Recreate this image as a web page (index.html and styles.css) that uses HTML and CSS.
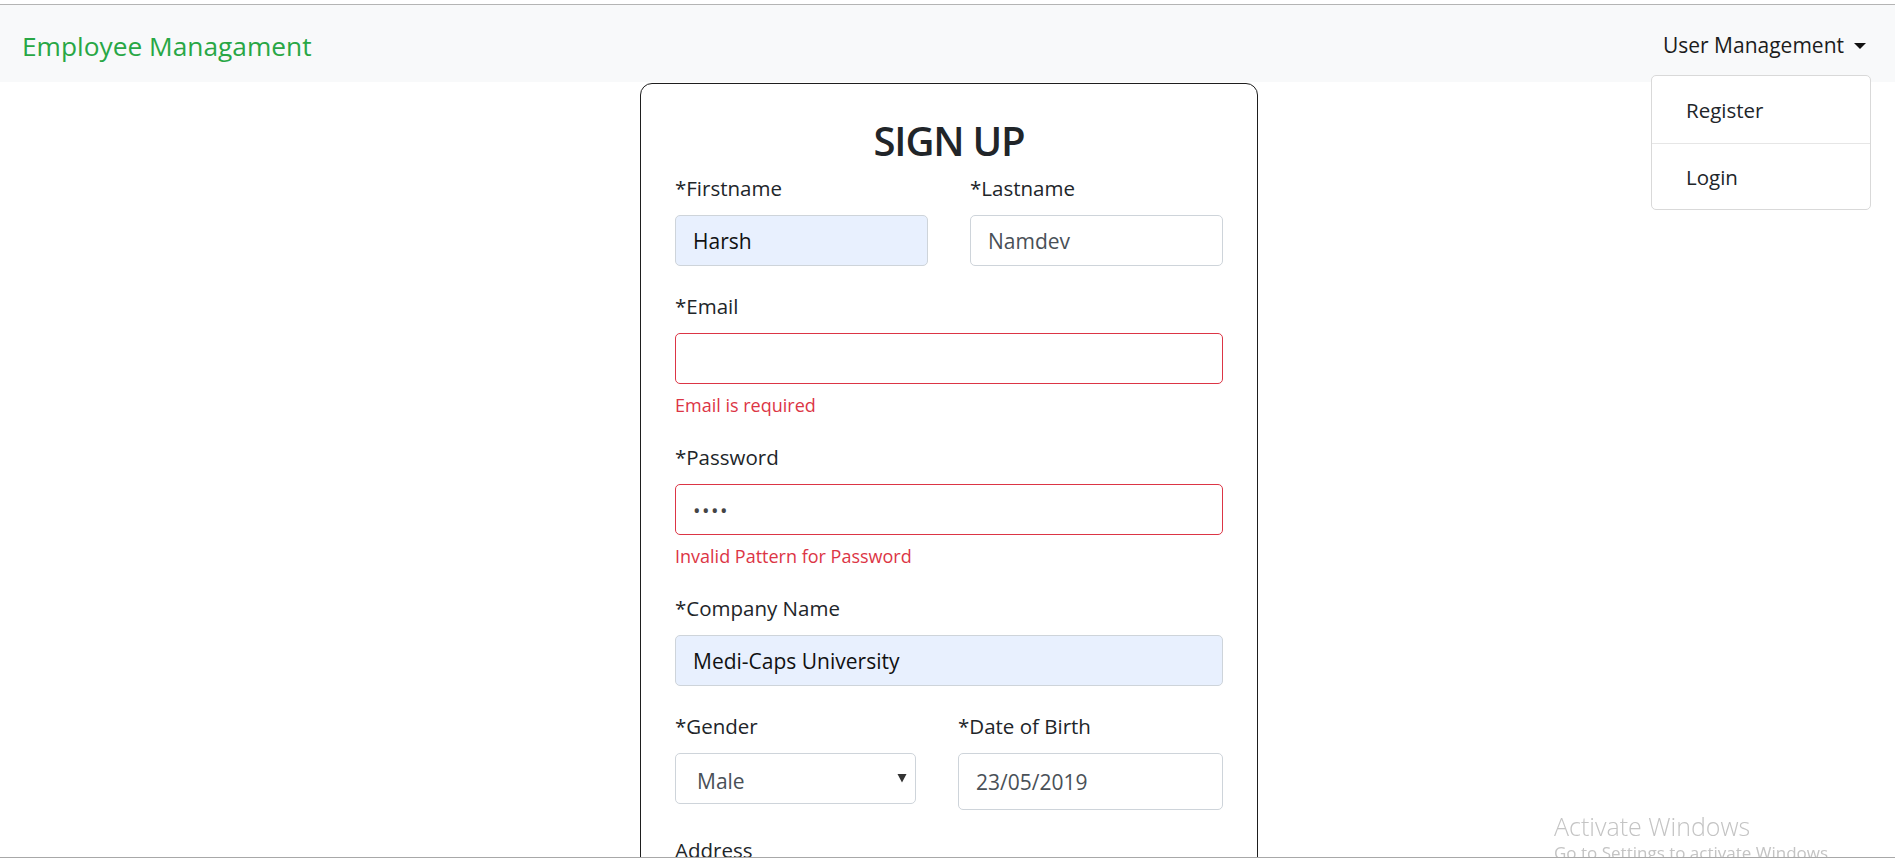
FILE: index.html
```html
<!DOCTYPE html>
<html lang="en">
<head>
<meta charset="utf-8">
<title>Employee Managament</title>
<link rel="stylesheet" href="styles.css">
</head>
<body>
<div class="window-top"></div>
<nav class="navbar">
  <a class="brand" href="#">Employee Managament</a>
  <div class="nav-item">
    <a class="nav-link" href="#">User Management <span class="caret"></span></a>
    <div class="dropdown-menu">
      <a class="dropdown-item" href="#">Register</a>
      <a class="dropdown-item" href="#">Login</a>
    </div>
  </div>
</nav>
<main class="page">
  <section class="card">
    <h2 class="title">SIGN UP</h2>
    <form class="form">
      <div class="row two">
        <div class="group">
          <label class="label">*Firstname</label>
          <input class="field autofill" type="text" value="Harsh">
        </div>
        <div class="group">
          <label class="label">*Lastname</label>
          <input class="field" type="text" value="Namdev">
        </div>
      </div>
      <div class="group">
        <label class="label">*Email</label>
        <input class="field invalid" type="text" value="">
        <div class="error">Email is required</div>
      </div>
      <div class="group">
        <label class="label">*Password</label>
        <input class="field invalid dots" type="text" value="••••">
        <div class="error">Invalid Pattern for Password</div>
      </div>
      <div class="group">
        <label class="label">*Company Name</label>
        <input class="field autofill" type="text" value="Medi-Caps University">
      </div>
      <div class="row split">
        <div class="group">
          <label class="label">*Gender</label>
          <div class="select-wrap">
            <select class="field select">
              <option>Male</option>
              <option>Female</option>
            </select>
            <svg class="select-arrow" width="10" height="10" viewBox="0 0 10 10"><polygon points="0.5,1 9.5,1 5,9.5" fill="#333"/></svg>
          </div>
        </div>
        <div class="group">
          <label class="label">*Date of Birth</label>
          <input class="field date" type="text" value="23/05/2019">
        </div>
      </div>
      <div class="group">
        <label class="label">Address</label>
        <textarea class="field area"></textarea>
      </div>
      <div class="group">
        <button class="submit" type="button">Submit</button>
      </div>
    </form>
  </section>
</main>
<div class="watermark">
  <div class="wm-title">Activate Windows</div>
  <div class="wm-sub">Go to Settings to activate Windows.</div>
</div>
<div class="window-bottom"></div>
</body>
</html>
```
FILE: styles.css
```css
html, body {
  margin: 0;
  padding: 0;
  overflow: hidden;
  background: #fff;
}
body {
  font-family: "Open Sans", "Noto Sans", sans-serif;
  color: #212529;
  height: 861px;
}
.window-top {
  height: 4px;
  background: #fff;
}
.navbar {
  display: flex;
  justify-content: space-between;
  align-items: stretch;
  height: 77px;
  border-top: 1px solid #b4b4b4;
  background: #f8f9fa;
  padding: 0 24px 0 22px;
  position: relative;
  z-index: 5;
}
.brand {
  display: flex;
  align-items: center;
  padding-top: 5px;
  font-size: 26.3px;
  color: #28a745;
  text-decoration: none;
}
.nav-item {
  position: relative;
  display: flex;
}
.nav-link {
  display: flex;
  align-items: center;
  gap: 10px;
  padding: 3px 5px 0 0;
  font-size: 21px;
  color: #1c1c1c;
  text-decoration: none;
}
.caret {
  width: 0;
  height: 0;
  border-top: 6px solid #111;
  border-left: 6.5px solid transparent;
  border-right: 6.5px solid transparent;
  margin-top: 1px;
}
.dropdown-menu {
  position: absolute;
  top: 70px;
  right: 0;
  width: 220px;
  box-sizing: border-box;
  background: #fff;
  border: 1px solid #d9d9d9;
  border-radius: 5px;
  display: flex;
  flex-direction: column;
}
.dropdown-item {
  height: 67px;
  display: flex;
  align-items: center;
  padding-left: 34px;
  padding-top: 1px;
  box-sizing: border-box;
  font-size: 20.5px;
  color: #212529;
  text-decoration: none;
}
.dropdown-item + .dropdown-item {
  border-top: 1px solid #e6e6e6;
  padding-top: 0;
  height: 66px;
}
.page {
  display: flex;
  justify-content: center;
  padding-left: 3px;
}
.card {
  width: 618px;
  box-sizing: border-box;
  margin-top: 1px;
  border: 1px solid #1e1e1e;
  border-radius: 12px;
  padding: 33px 34px 40px;
  background: #fff;
}
.title {
  margin: 0 0 8px;
  font-size: 40px;
  line-height: 48px;
  font-weight: 600;
  letter-spacing: -1.2px;
  text-align: center;
  color: #212529;
}
.form {
  display: flex;
  flex-direction: column;
}
.row {
  display: grid;
  column-gap: 42px;
}
.row.two {
  grid-template-columns: 1fr 1fr;
}
.row.split {
  grid-template-columns: 241px 1fr;
}
.group {
  margin-bottom: 25px;
}
.label {
  display: block;
  font-size: 20.5px;
  line-height: 30px;
  margin-bottom: 12px;
  color: #212529;
}
.field {
  display: block;
  width: 100%;
  height: 51px;
  box-sizing: border-box;
  border: 1px solid #ced4da;
  border-radius: 5px;
  padding: 1px 17px 0;
  font-family: "Open Sans", "Noto Sans", sans-serif;
  font-size: 21px;
  color: #495057;
  background: #fff;
  outline: none;
}
.field.autofill {
  background: #e8f0fe;
  color: #111;
}
.field.invalid {
  border-color: #dc3545;
}
.field.dots {
  letter-spacing: 1.5px;
  color: #444;
  font-size: 20px;
}
.field.date {
  height: 57px;
}
.select-wrap {
  position: relative;
}
.field.select {
  appearance: none;
  -webkit-appearance: none;
  padding: 4px 17px 0 21px;
  color: #495057;
}
.select-arrow {
  position: absolute;
  right: 9px;
  top: 20px;
}
.field.area {
  height: 90px;
  resize: none;
}
.error {
  margin-top: 9px;
  font-size: 18px;
  line-height: 24px;
  color: #dc3545;
}
.submit {
  font-family: "Open Sans", sans-serif;
  font-size: 20px;
  padding: 8px 20px;
  border: 1px solid #007bff;
  background: #007bff;
  color: #fff;
  border-radius: 5px;
}
.watermark {
  position: fixed;
  left: 1554px;
  top: 811px;
  color: #c4c4c4;
  z-index: 8;
}
.wm-title {
  font-size: 25px;
  font-weight: 300;
  line-height: 30px;
}
.wm-sub {
  font-size: 17px;
  line-height: 22px;
  margin-top: 1px;
}
.window-bottom {
  position: fixed;
  left: 0;
  right: 0;
  bottom: 0;
  height: 3px;
  background: #fff;
  border-top: 1px solid #a8a8a8;
  z-index: 10;
}
```
